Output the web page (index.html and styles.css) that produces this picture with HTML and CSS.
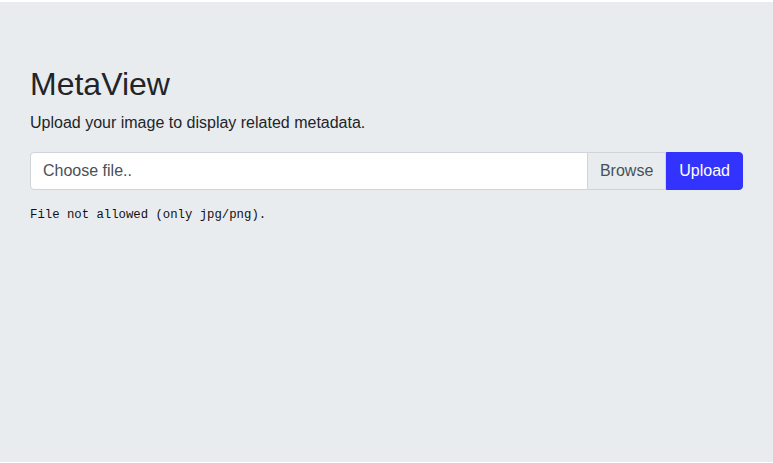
FILE: index.html
```html
<!DOCTYPE html>
<html lang="en">
<head>
<meta charset="utf-8">
<title>MetaView</title>
<link rel="stylesheet" href="styles.css">
</head>
<body>
<div class="page">
  <div class="container">
    <h1 class="title">MetaView</h1>
    <p class="lead">Upload your image to display related metadata.</p>
    <form class="input-group">
      <div class="file-field">Choose file..</div>
      <span class="browse">Browse</span>
      <button type="button" class="upload">Upload</button>
    </form>
    <div class="error">File not allowed (only jpg/png).</div>
  </div>
</div>
</body>
</html>
```

FILE: styles.css
```css
html {
  background: #ffffff;
}
body {
  margin: 0;
  font-family: "Liberation Sans", Arial, sans-serif;
  color: #212529;
}
.page {
  margin: 2px 0 0 0;
  height: 460px;
  background: #e9ecef;
  box-sizing: border-box;
  padding-top: 63px;
}
.container {
  margin: 0 30px;
}
.title {
  margin: 0 0 8px 0;
  font-size: 32px;
  font-weight: 400;
  line-height: 1.2;
}
.lead {
  margin: 0 0 17px 0;
  font-size: 16px;
  line-height: 24px;
}
.input-group {
  display: flex;
  height: 38px;
  margin: 0;
}
.file-field {
  flex: 1;
  background: #ffffff;
  border: 1px solid #ced4da;
  border-radius: 4px 0 0 4px;
  padding: 0 12px;
  font-size: 16px;
  line-height: 36px;
  color: #495057;
}
.browse {
  background: #e9ecef;
  border: 1px solid #ced4da;
  border-left: 0;
  padding: 0 12px;
  font-size: 16px;
  line-height: 36px;
  color: #495057;
}
.upload {
  background: #3333ff;
  border: 1px solid #3333ff;
  border-radius: 0 4px 4px 0;
  padding: 0 12px;
  margin: 0;
  font-family: "Liberation Sans", Arial, sans-serif;
  font-size: 16px;
  line-height: 36px;
  color: #ffffff;
}
.error {
  margin-top: 16px;
  font-family: "Liberation Mono", "Courier New", monospace;
  font-size: 12.3px;
  line-height: 18px;
  color: #111111;
}
```
